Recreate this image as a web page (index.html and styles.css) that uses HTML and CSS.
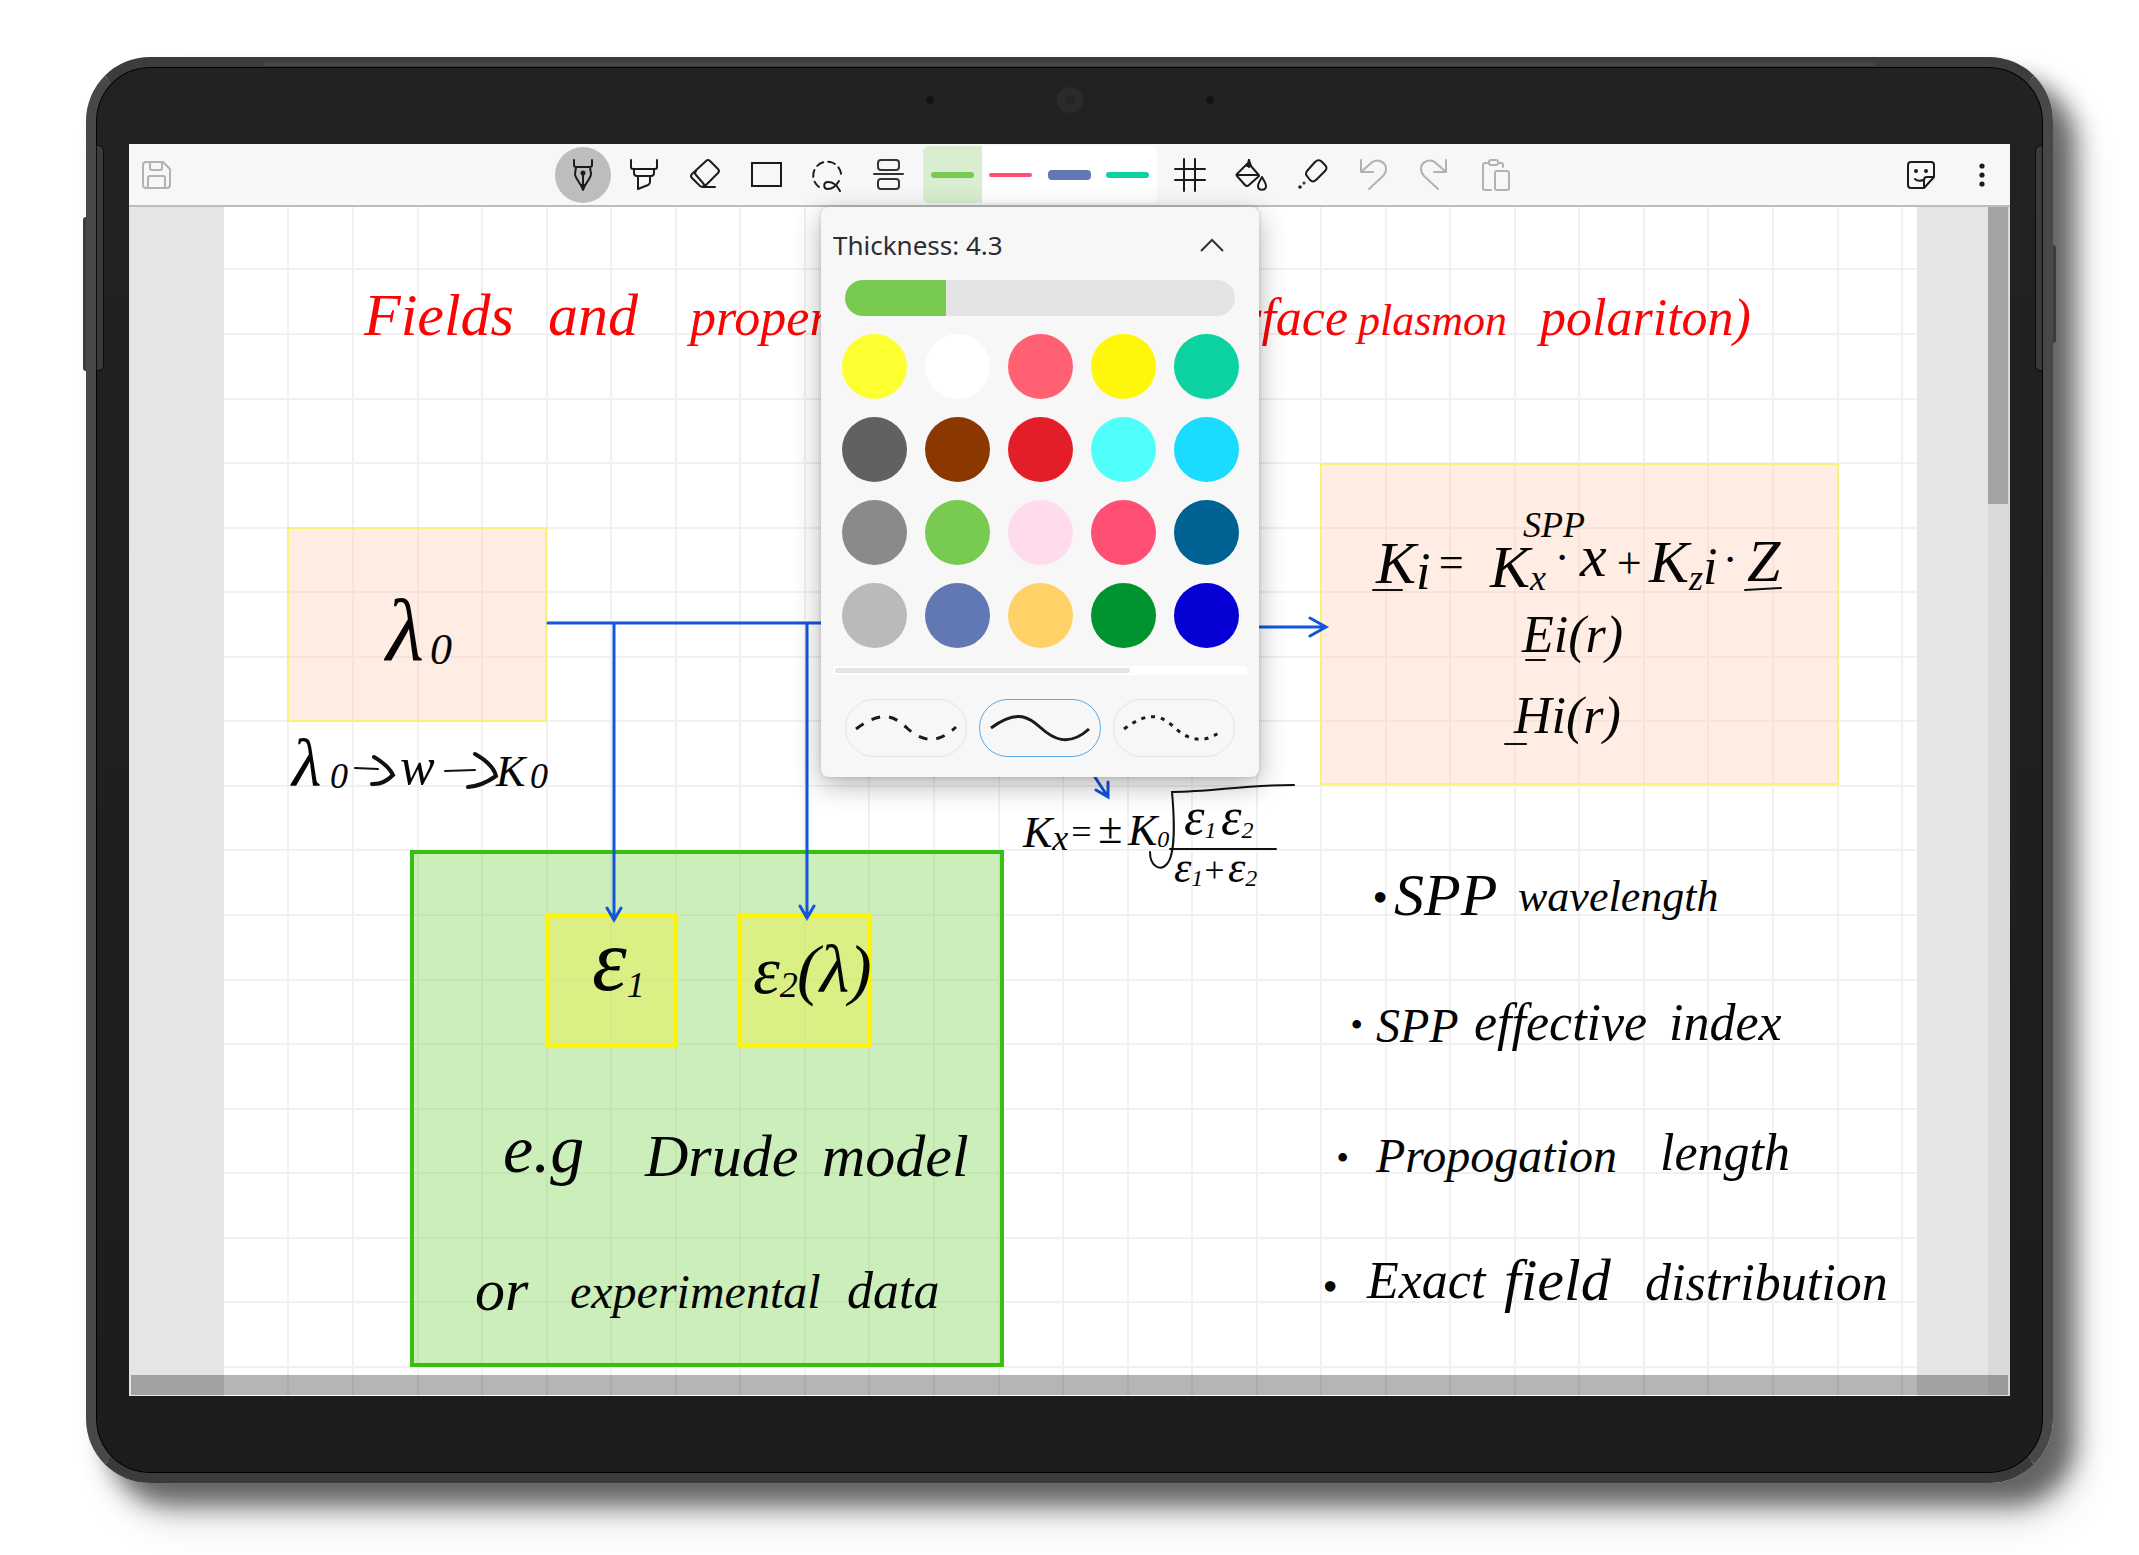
FILE: index.html
```html
<!DOCTYPE html>
<html lang="en">
<head>
<meta charset="utf-8">
<title>Ink notes</title>
<link rel="stylesheet" href="styles.css">
</head>
<body>
<main class="device">
  <span class="edge-top"></span>
  <span class="side-button side-button-left"></span>
  <span class="side-button side-button-right"></span>
  <span class="speaker speaker-left"></span>
  <span class="speaker speaker-right"></span>
  <span class="sensors"><i class="mic"></i><i class="camera"></i><i class="mic"></i></span>

  <div class="screen">
    <header class="toolbar">
      <button class="tool muted" aria-label="Save">
        <svg class="icon" viewBox="0 0 32 32"><path d="M5 3h17l7 7v16a3 3 0 0 1-3 3H5a3 3 0 0 1-3-3V6a3 3 0 0 1 3-3zM9 3v6a2 2 0 0 0 2 2h8a2 2 0 0 0 2-2V3M7 29V19a2 2 0 0 1 2-2h13a2 2 0 0 1 2 2v10"/></svg>
      </button>

      <div class="tools">
        <button class="tool selected" aria-label="Pen">
          <svg class="icon" viewBox="0 0 32 32"><path d="M7 1v5q0 2 2 2h14q2 0 2-2V1M9 8l-1 7c0 4 6 10 8 15 2-5 8-11 8-15l-1-7M16 14v15"/><circle class="solid" cx="16" cy="14" r="1.5"/><path class="solid" d="M14 26h4l-2 5z"/></svg>
        </button>
        <button class="tool" aria-label="Highlighter">
          <svg class="icon" viewBox="0 0 32 32"><path d="M3 1v7q0 2 2 2h22q2 0 2-2V1M6 10v4q0 3 3 3h14q3 0 3-3v-4M10 17v13l10-4q2-1 2-3v-6"/></svg>
        </button>
        <button class="tool" aria-label="Eraser">
          <svg class="icon" viewBox="0 0 32 32"><path d="M17 2q2-2 4 0l8 8q2 2 0 4L16 27q-2 2-5 0l-8-8q-2-2 0-4zM7 12q-2 2 0 4l7 8q2 2 0 4M13 28h13"/></svg>
        </button>
        <button class="tool" aria-label="Shape">
          <svg class="icon" viewBox="0 0 32 32"><path class="square" d="M2 4h29v23H2z"/></svg>
        </button>
        <button class="tool" aria-label="Lasso">
          <svg class="icon" viewBox="0 0 32 32"><path class="dashes" d="M8 28A14 14 0 1 1 30 19"/><path d="M28 22c-3 5-7 8-11 8-5 0-5-7 0-7 6 0 9 3 12 9"/></svg>
        </button>
        <button class="tool" aria-label="Insert space">
          <svg class="icon thin" viewBox="0 0 32 32"><rect x="6" y="1" width="21" height="10" rx="3"/><path d="M2 15h29"/><rect x="6" y="20" width="21" height="10" rx="3"/></svg>
        </button>

        <div class="presets">
          <button class="preset current" aria-label="Green pen"><span class="stroke stroke-green"></span></button>
          <button class="preset" aria-label="Pink pen"><span class="stroke stroke-pink"></span></button>
          <button class="preset" aria-label="Blue pen"><span class="stroke stroke-blue"></span></button>
          <button class="preset" aria-label="Teal pen"><span class="stroke stroke-teal"></span></button>

          <section class="popup" aria-label="Pen settings">
            <div class="popup-head">
              <label for="thickness">Thickness: 4.3</label>
              <button class="collapse" aria-label="Collapse">
                <svg viewBox="0 0 26 16"><path d="M2 14L13 3l11 11"/></svg>
              </button>
            </div>
            <input class="slider" id="thickness" type="range" min="0" max="17" step="0.1" value="4.3">
            <div class="palette">
              <button class="swatch c1" aria-label="Lemon"></button>
              <button class="swatch c2" aria-label="White"></button>
              <button class="swatch c3" aria-label="Coral"></button>
              <button class="swatch c4" aria-label="Yellow"></button>
              <button class="swatch c5" aria-label="Teal"></button>
              <button class="swatch c6" aria-label="Dark grey"></button>
              <button class="swatch c7" aria-label="Brown"></button>
              <button class="swatch c8" aria-label="Red"></button>
              <button class="swatch c9" aria-label="Aqua"></button>
              <button class="swatch c10" aria-label="Sky blue"></button>
              <button class="swatch c11" aria-label="Grey"></button>
              <button class="swatch c12" aria-label="Green"></button>
              <button class="swatch c13" aria-label="Pale pink"></button>
              <button class="swatch c14" aria-label="Pink"></button>
              <button class="swatch c15" aria-label="Petrol"></button>
              <button class="swatch c16" aria-label="Light grey"></button>
              <button class="swatch c17" aria-label="Slate blue"></button>
              <button class="swatch c18" aria-label="Apricot"></button>
              <button class="swatch c19" aria-label="Dark green"></button>
              <button class="swatch c20" aria-label="Blue"></button>
            </div>
            <div class="palette-scroll"><span></span></div>
            <div class="line-styles">
              <button class="line-style" aria-label="Dashed line"><svg viewBox="0 0 120 56"><path class="wave-dash" d="M10 29C38 8 50 18 61 28S88 48 110 27"/></svg></button>
              <button class="line-style chosen" aria-label="Solid line"><svg viewBox="0 0 120 56"><path d="M11 28C38 8 50 18 61 28S88 48 109 29"/></svg></button>
              <button class="line-style" aria-label="Dotted line"><svg viewBox="0 0 120 56"><path class="wave-dot" d="M10 29C38 8 50 18 61 28S88 46 107 31"/></svg></button>
            </div>
          </section>
        </div>

        <button class="tool" aria-label="Grid">
          <svg class="icon" viewBox="0 0 32 32"><path d="M10 0v32M21 0v32M1 10h30M1 21h30"/></svg>
        </button>
        <button class="tool" aria-label="Fill">
          <svg class="icon" viewBox="0 0 32 32"><path d="M14 1v7M12 5l-10 10q-1 1 0 2l8 9q2 2 4 0l9-8q2-1 0-3L14 5M2 16h22M27 18c-2 4-4 6-4 9 0 5 8 5 8 0 0-3-2-5-4-9z"/><path class="solid" d="M14 1l-2 6h4z"/></svg>
        </button>
        <button class="tool" aria-label="Laser pointer">
          <svg class="icon" viewBox="0 0 32 32"><path d="M19 3q3-3 6-1l4 4q3 3 0 6l-9 9q-3 3-6 0l-3-4q-2-2 0-5z"/><circle class="solid" cx="8" cy="24" r=".5"/><circle class="solid" cx="4" cy="28" r=".8"/></svg>
        </button>
        <button class="tool muted" aria-label="Undo">
          <svg class="icon" viewBox="0 0 32 32"><path d="M4 1v12h12M4 13l9-8c7-7 16-2 16 5 0 3-1 5-3 7L12 30"/></svg>
        </button>
        <button class="tool muted" aria-label="Redo">
          <svg class="icon" viewBox="0 0 32 32"><path d="M28 1v12H16M28 13l-9-8C12-2 3 3 3 10c0 3 1 5 3 7l14 13"/></svg>
        </button>
        <button class="tool muted" aria-label="Paste">
          <svg class="icon" viewBox="0 0 32 32"><path d="M10 4H6a2 2 0 0 0-2 2v23a2 2 0 0 0 2 2h6M20 4h2a2 2 0 0 1 2 2v2"/><rect x="10" y="1" width="9" height="5" rx="2"/><rect x="16" y="12" width="14" height="19" rx="2"/></svg>
        </button>
      </div>

      <div class="tools">
        <button class="tool" aria-label="Stickers">
          <svg class="icon" viewBox="0 0 32 32"><path d="M19 29H6a3 3 0 0 1-3-3V6a3 3 0 0 1 3-3h20a3 3 0 0 1 3 3v12L19 29v-8q0-3 3-3h7M10 20q3 3 8 1"/><circle class="solid" cx="11" cy="12" r="1"/><circle class="solid" cx="21" cy="12" r="1"/></svg>
        </button>
        <button class="tool" aria-label="More">
          <svg class="icon" viewBox="0 0 32 32"><circle class="dot" cx="16" cy="7" r="2.6"/><circle class="dot" cx="16" cy="16" r="2.6"/><circle class="dot" cx="16" cy="25" r="2.6"/></svg>
        </button>
      </div>
    </header>

    <div class="workspace">
      <svg class="sheet" viewBox="129 207 1881 1189">
        <rect class="paper" x="224" y="206" width="1693" height="1190"/>
        <path class="grid" d="M288 206v1190M353 206v1190M418 206v1190M482 206v1190M547 206v1190M611 206v1190M676 206v1190M740 206v1190M805 206v1190M869 206v1190M934 206v1190M999 206v1190M1063 206v1190M1128 206v1190M1192 206v1190M1257 206v1190M1321 206v1190M1386 206v1190M1450 206v1190M1515 206v1190M1579 206v1190M1644 206v1190M1708 206v1190M1773 206v1190M1838 206v1190M1902 206v1190M224 269h1693M224 334h1693M224 399h1693M224 463h1693M224 528h1693M224 592h1693M224 657h1693M224 721h1693M224 786h1693M224 850h1693M224 915h1693M224 980h1693M224 1044h1693M224 1109h1693M224 1173h1693M224 1238h1693M224 1302h1693M224 1367h1693"/>

        <rect class="box-peach" x="288" y="528" width="258" height="193"/>
        <rect class="box-peach" x="1321" y="464" width="517" height="320"/>
        <rect class="box-green" x="412" y="852" width="590" height="513"/>
        <rect class="box-yellow" x="547" y="915" width="129" height="130"/>
        <rect class="box-yellow" x="740" y="915" width="130" height="130"/>

        <path class="arrow" d="M548 623h300M614 624v296M607 908l7 12 7-12M807 624v294M800 906l7 12 7-12M1240 627h86M1310 618l16 9-16 9M1085 762l23 35M1096 790l12 7v-15"/>

        <g class="ink red">
          <text class="s60" x="364" y="335">Fields</text>
          <text class="s60" x="548" y="335">and</text>
          <text class="s52" x="690" y="335">properties</text>
          <text class="s52 end" x="1348" y="335">surface</text>
          <text class="s44" x="1358" y="335">plasmon</text>
          <text class="s52" x="1540" y="335">polariton)</text>
        </g>

        <g class="ink">
          <text class="s88" x="386" y="660">λ<tspan class="s44" x="430" dy="4">0</tspan></text>
          <text class="s68" x="292" y="786">λ<tspan class="s36" x="330" dy="2">0</tspan></text>
          <text class="s52" x="400" y="784">w</text>
          <text class="s44" x="496" y="786">K<tspan class="s36" x="530" dy="2">0</tspan></text>

          <text class="s88" x="592" y="990">ε<tspan class="s36" dy="7">1</tspan></text>
          <text class="s68" x="753" y="993">ε<tspan class="s36" dy="4">2</tspan></text>
          <text class="s68" x="797" y="992">(λ)</text>

          <text class="s68" x="503" y="1172">e.g</text>
          <text class="s60" x="645" y="1176">Drude</text>
          <text class="s60" x="822" y="1176">model</text>
          <text class="s60" x="475" y="1310">or</text>
          <text class="s48" x="570" y="1308">experimental</text>
          <text class="s52" x="847" y="1308">data</text>

          <text class="s44" x="1023" y="847">K<tspan class="s36" dy="3">x</tspan></text>
          <text class="s36" x="1069" y="844">=</text><text class="s44" x="1098" y="843">±</text>
          <text class="s44" x="1128" y="845">K<tspan class="s24" dy="2">0</tspan></text>
          <text class="s52" x="1184" y="834">ε<tspan class="s24" dy="4">1</tspan></text>
          <text class="s52" x="1221" y="834">ε<tspan class="s24" dy="4">2</tspan></text>
          <text class="s44" x="1174" y="882">ε<tspan class="s24" dy="4">1</tspan></text>
          <text class="s36" x="1202" y="882">+</text>
          <text class="s44" x="1228" y="882">ε<tspan class="s24" dy="4">2</tspan></text>

          <text class="s60" x="1376" y="583">K<tspan class="s52" dy="6">i</tspan></text>
          <text class="s44" x="1436" y="577">=</text>
          <text class="s60" x="1490" y="587">K<tspan class="s36" dy="3">x</tspan></text>
          <text class="s36" x="1523" y="537">SPP</text>
          <text class="s44" x="1556" y="572">·</text><text class="s60" x="1580" y="576">x</text>
          <text class="s44" x="1614" y="578">+</text>
          <text class="s60" x="1649" y="582">K<tspan class="s36" dy="8">z</tspan><tspan class="s52" dy="-6">i</tspan></text>
          <text class="s44" x="1724" y="574">·</text><text class="s60" x="1747" y="581">Z</text>
          <text class="s52" x="1522" y="652">Ei(r)</text>
          <text class="s52" x="1514" y="733">Hi(r)</text>

          <text class="s44" x="1372" y="912">•</text>
          <text class="s60" x="1394" y="915">SPP</text><text class="s44" x="1518" y="911">wavelength</text>
          <text class="s36" x="1350" y="1037">•</text>
          <text class="s48" x="1376" y="1042">SPP</text><text class="s52" x="1474" y="1040">effective</text><text class="s52" x="1669" y="1040">index</text>
          <text class="s36" x="1336" y="1170">•</text>
          <text class="s48" x="1376" y="1172">Propogation</text><text class="s52" x="1660" y="1170">length</text>
          <text class="s44" x="1322" y="1301">•</text>
          <text class="s52" x="1367" y="1298">Exact</text><text class="s60" x="1504" y="1300">field</text><text class="s52" x="1645" y="1300">distribution</text>
        </g>

        <path class="pen" d="M355 768l23 1M445 771l30-1M1150 852c0 14 10 20 17 12 9-10 7-50 5-72 40 0 70-7 122-7M1170 849h106M1373 590h29M1745 590l36-2M1526 660h19M1505 744h21"/>
        <path class="pen thick" d="M374 757q14 8 19 18-10 10-21 9M475 754q18 10 21 22-14 10-28 11"/>
      </svg>
      <div class="scroll-y"><span></span></div>
      <div class="scroll-x"></div>
    </div>
  </div>
</main>
</body>
</html>
```

FILE: styles.css
```css
* { box-sizing: border-box; }

body {
  margin: 0;
  padding: 57px 86px 72px;
  background: #fff;
  font-family: "Noto Sans", "Open Sans", sans-serif;
  overflow-x: hidden;
}

button {
  border: 0;
  padding: 0;
  background: none;
  color: inherit;
  font: inherit;
}

/* Tablet body */
.device {
  position: relative;
  padding: 77px 33px;
  border: 10px solid #484847;
  border-top-color: #3b3c3b;
  border-bottom-color: #3c3b39;
  border-radius: 64px;
  background: linear-gradient(#222, #1b1c1b);
  box-shadow:
    inset 0 0 0 1px #000,
    22px 22px 24px rgba(0, 0, 0, 0.56),
    28px 38px 40px rgba(0, 0, 0, 0.12);
}

.edge-top {
  position: absolute;
  top: -9px;
  left: 168px;
  right: 168px;
  height: 8px;
  background: linear-gradient(#363736, #484948);
}

.side-button {
  position: absolute;
  width: 3px;
  background: #3c3c3b;
}

.side-button-left {
  top: 150px;
  left: -13px;
  height: 154px;
  border-radius: 3px 0 0 3px;
}

.side-button-right {
  top: 178px;
  right: -13px;
  height: 98px;
  border-radius: 0 3px 3px 0;
}

.speaker {
  position: absolute;
  top: 78px;
  width: 8px;
  height: 226px;
  border: 1px solid #0c0c0c;
  background: #3a3a39;
}

.speaker-left { left: 0; border-radius: 0 6px 6px 0; }
.speaker-right { right: 0; border-radius: 6px 0 0 6px; }

.sensors {
  position: absolute;
  top: 20px;
  left: 0;
  right: 0;
  display: flex;
  justify-content: center;
  align-items: center;
  gap: 123px;
}

.camera {
  width: 26px;
  height: 26px;
  border: 8px solid #2b2b2c;
  border-radius: 50%;
  background: #22242a;
}

.mic {
  width: 8px;
  height: 8px;
  border-radius: 50%;
  background: #141414;
}

.screen { display: flex; flex-direction: column; }

/* Toolbar */
.toolbar {
  position: relative;
  z-index: 1;
  display: flex;
  align-items: center;
  justify-content: space-between;
  height: 63px;
  border-bottom: 2px solid #bdbdbd;
  background: #f7f7f7;
}

.tools { display: flex; align-items: center; gap: 5px; }

.tool {
  display: flex;
  align-items: center;
  justify-content: center;
  width: 56px;
  height: 56px;
  border-radius: 50%;
  color: #1b1b1b;
}

.tool.selected { background: #bdbdbd; }
.tool.muted { color: #b2b2b2; }

.icon {
  width: 32px;
  height: 32px;
  fill: none;
  stroke: currentColor;
  stroke-width: 2;
  stroke-linecap: round;
  stroke-linejoin: round;
  overflow: visible;
}

.icon .solid { fill: currentColor; }
.icon .dot { fill: currentColor; stroke: none; }
.icon .square { stroke-linejoin: miter; }
.icon .dashes { stroke-dasharray: 7 5; }
.icon.thin { color: #333; }

.presets {
  position: relative;
  display: flex;
  width: 234px;
  height: 57px;
  margin-left: 2px;
  border-radius: 6px;
  background: #fff;
}

.preset {
  flex: 1;
  display: flex;
  align-items: center;
  justify-content: center;
}

.preset.current { border-radius: 6px 0 0 6px; background: #d9eed1; }
.stroke { width: 43px; border-radius: 4px; }
.stroke-green { height: 6px; background: #78ca50; }
.stroke-pink { height: 4px; background: #ff4f74; }
.stroke-blue { height: 10px; background: #6278b4; }
.stroke-teal { height: 6px; background: #0cd2a1; }

/* Pen settings */
.popup {
  position: absolute;
  top: calc(100% + 4px);
  left: 50%;
  width: 438px;
  padding: 12px 12px 20px;
  border-radius: 8px;
  background: #f7f7f7;
  box-shadow: 0 8px 28px rgba(0, 0, 0, 0.3), 0 0 4px rgba(0, 0, 0, 0.14);
  transform: translateX(-50%);
}

.popup-head {
  display: flex;
  align-items: center;
  justify-content: space-between;
  height: 52px;
  padding-right: 22px;
  color: #2d2d33;
  font-size: 26px;
  line-height: 52px;
}

.collapse { display: flex; }

.collapse svg {
  width: 26px;
  height: 16px;
  fill: none;
  stroke: #333;
  stroke-width: 2;
}

.slider {
  display: block;
  appearance: none;
  width: 390px;
  height: 36px;
  margin: 9px 12px 18px;
  border-radius: 18px;
  background: linear-gradient(to right, #78ca50 101px, #e4e4e4 101px);
}

.slider::-webkit-slider-thumb {
  appearance: none;
  width: 1px;
  height: 36px;
  background: transparent;
}

.palette {
  display: grid;
  grid-template-columns: repeat(5, 65px);
  justify-content: center;
  gap: 18px;
}

.swatch { width: 65px; height: 65px; border-radius: 50%; }
.c1 { background: #fcff30; }
.c2 { background: #fff; }
.c3 { background: #ff6173; }
.c4 { background: #fff70a; }
.c5 { background: #0cd2a1; }
.c6 { background: #616161; }
.c7 { background: #8b3800; }
.c8 { background: #e41e28; }
.c9 { background: #50fffa; }
.c10 { background: #1adcff; }
.c11 { background: #8a8a8a; }
.c12 { background: #78ca50; }
.c13 { background: #ffdceb; }
.c14 { background: #ff4f74; }
.c15 { background: #006292; }
.c16 { background: #bababa; }
.c17 { background: #6278b4; }
.c18 { background: #ffd268; }
.c19 { background: #009330; }
.c20 { background: #0600d4; }

.palette-scroll {
  height: 9px;
  margin: 18px 0 24px;
  padding: 2px;
  background: #fff;
}

.palette-scroll span {
  display: block;
  width: 72%;
  height: 5px;
  border-radius: 3px;
  background: #e4e4e4;
}

.line-styles {
  display: flex;
  gap: 12px;
  padding: 0 12px;
}

.line-style {
  flex: 1;
  height: 58px;
  border: 1px solid #e4e4e4;
  border-radius: 29px;
}

.line-style.chosen { border-color: #58a8e6; }

.line-style svg {
  display: block;
  width: 100%;
  height: 100%;
  fill: none;
  stroke: #1b1b1b;
  stroke-width: 3;
}

.wave-dash { stroke-dasharray: 9 9; }
.wave-dot { stroke-dasharray: 4 6; }

/* Page being written on */
.workspace { position: relative; background: #e5e5e5; }
.sheet { display: block; width: 100%; }
.paper { fill: #fff; }
.grid { fill: none; stroke: #f1f1f1; stroke-width: 2; }
.box-peach { fill: rgba(255, 205, 180, 0.38); stroke: #fbf176; stroke-width: 2; }
.box-green { fill: rgba(125, 212, 85, 0.4); stroke: #38c010; stroke-width: 4; }
.box-yellow { fill: rgba(234, 242, 80, 0.5); stroke: #fff400; stroke-width: 4; }
.arrow {
  fill: none;
  stroke: #1455dc;
  stroke-width: 3;
  stroke-linecap: round;
}

.ink {
  fill: #050505;
  font-family: "Liberation Serif", serif;
  font-style: italic;
}

.ink.red { fill: #fa0505; }
.s24 { font-size: 24px; }
.s36 { font-size: 36px; }
.s44 { font-size: 44px; }
.s48 { font-size: 48px; }
.s52 { font-size: 52px; }
.s60 { font-size: 60px; }
.s68 { font-size: 68px; }
.s88 { font-size: 88px; }
.end { text-anchor: end; }

.pen { fill: none; stroke: #111; stroke-width: 2; stroke-linecap: round; }
.pen.thick { stroke-width: 4; }

.scroll-y {
  position: absolute;
  top: 0;
  right: 0;
  bottom: 0;
  width: 22px;
  background: rgba(0, 0, 0, 0.05);
}

.scroll-y span {
  display: block;
  width: 20px;
  height: 25%;
  background: #a3a3a3;
}

.scroll-x {
  position: absolute;
  right: 2px;
  bottom: 1px;
  left: 2px;
  height: 20px;
  background: rgba(0, 0, 0, 0.29);
}
```
